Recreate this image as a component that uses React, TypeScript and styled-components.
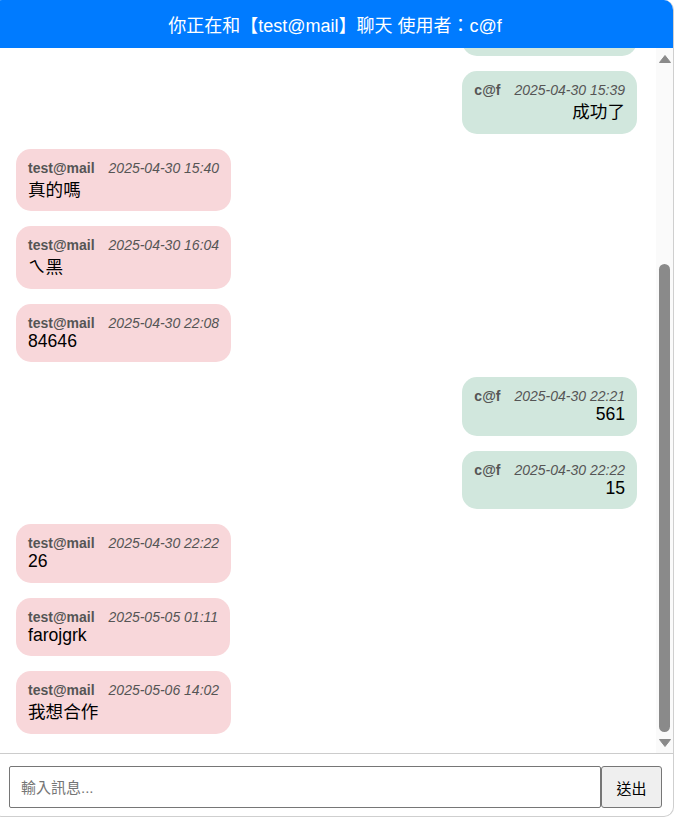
import React, { useLayoutEffect, useRef, useState } from "react";
import styled, { createGlobalStyle } from "styled-components";

const GlobalStyle = createGlobalStyle`
  html, body {
    margin: 0;
    padding: 0;
    background: #ffffff;
    overflow: hidden;
  }
  body {
    font-family: "Liberation Sans", Arial, "Noto Sans CJK TC", sans-serif;
  }
`;

const Container = styled.div`
  box-sizing: border-box;
  width: 682px;
  height: 817px;
  margin-left: -8px;
  border: 1px solid #cfcfcf;
  border-top: none;
  border-radius: 10px;
  overflow: hidden;
  display: flex;
  flex-direction: column;
  background: #fff;
`;

const Header = styled.div`
  flex: none;
  height: 48px;
  box-sizing: border-box;
  padding: 11px 0 11px 4px;
  background: #007bff;
  color: #fff;
  text-align: center;
  font-size: 18px;
  font-family: "Liberation Sans", Arial, "Noto Sans CJK TC", sans-serif;
`;

const Body = styled.div`
  flex: 1;
  min-height: 0;
  display: flex;
`;

const Messages = styled.div`
  flex: 1;
  min-width: 0;
  overflow-y: scroll;
  display: flex;
  flex-direction: column;
  gap: 15px;
  padding: 10px 19px 19px 23px;
  box-sizing: border-box;
  scrollbar-width: none;
  &::-webkit-scrollbar {
    display: none;
  }
`;

const ScrollTrack = styled.div`
  flex: none;
  width: 17px;
  background: #fafafa;
  display: flex;
  flex-direction: column;
  align-items: center;
`;

const ArrowButton = styled.div`
  flex: none;
  height: 21px;
  width: 17px;
  display: flex;
  align-items: center;
  justify-content: center;
`;

const ThumbArea = styled.div`
  flex: 1;
  width: 100%;
  position: relative;
`;

const Thumb = styled.div`
  position: absolute;
  left: 3px;
  width: 11px;
  border-radius: 6px;
  background: #8a8a8a;
`;

const Row = styled.div<{ $mine: boolean }>`
  display: flex;
  justify-content: ${(p) => (p.$mine ? "flex-end" : "flex-start")};
  flex: none;
`;

const Bubble = styled.div<{ $mine: boolean }>`
  background: ${(p) => (p.$mine ? "#d1e7dd" : "#f8d7da")};
  border-radius: 15px;
  padding: 11px 12px 10.5px;
  text-align: ${(p) => (p.$mine ? "right" : "left")};
  max-width: 70%;
`;

const Meta = styled.div`
  font-size: 14px;
  color: #555;
  white-space: nowrap;
`;

const Name = styled.span`
  font-weight: bold;
  margin-right: 14px;
`;

const Time = styled.span`
  font-style: italic;
`;

const Text = styled.div`
  font-size: 17.6px;
  color: #000;
`;

const InputBar = styled.div`
  flex: none;
  display: flex;
  border-top: 1px solid #cccccc;
  padding: 12px 11px 8px 16px;
`;

const Input = styled.input`
  flex: 1;
  min-width: 0;
  height: 42px;
  box-sizing: border-box;
  border: 1px solid #767676;
  border-radius: 2px;
  padding: 0 11px;
  font-size: 15px;
  font-family: "Liberation Sans", Arial, "Noto Sans CJK TC", sans-serif;
  outline: none;
  &::placeholder {
    color: #757575;
  }
`;

const SendButton = styled.button`
  flex: none;
  width: 61px;
  height: 42px;
  box-sizing: border-box;
  background: #efefef;
  border: 1px solid #767676;
  border-radius: 3px;
  font-size: 15px;
  color: #000;
  font-family: "Liberation Sans", Arial, "Noto Sans CJK TC", sans-serif;
  padding: 0;
`;

type Msg = { from: string; time: string; text: string };

const ME = "c@f";

const messages: Msg[] = [
  { from: "test@mail", time: "2025-04-30 15:30", text: "你好" },
  { from: "c@f", time: "2025-04-30 15:32", text: "哈囉" },
  { from: "test@mail", time: "2025-04-30 15:35", text: "測試" },
  { from: "c@f", time: "2025-04-30 15:38", text: "test" },
  { from: "c@f", time: "2025-04-30 15:39", text: "成功了" },
  { from: "test@mail", time: "2025-04-30 15:40", text: "真的嗎" },
  { from: "test@mail", time: "2025-04-30 16:04", text: "ㄟ黑" },
  { from: "test@mail", time: "2025-04-30 22:08", text: "84646" },
  { from: "c@f", time: "2025-04-30 22:21", text: "561" },
  { from: "c@f", time: "2025-04-30 22:22", text: "15" },
  { from: "test@mail", time: "2025-04-30 22:22", text: "26" },
  { from: "test@mail", time: "2025-05-05 01:11", text: "farojgrk" },
  { from: "test@mail", time: "2025-05-06 14:02", text: "我想合作" },
];

function Arrow({ up }: { up: boolean }) {
  return (
    <svg width="12" height="8" viewBox="0 0 12 8">
      <polygon
        points={up ? "6,0.5 11.5,7.5 0.5,7.5" : "0.5,0.5 11.5,0.5 6,7.5"}
        fill="#8a8a8a"
        strokeLinejoin="round"
        stroke="#8a8a8a"
        strokeWidth="1"
      />
    </svg>
  );
}

export default function App() {
  const listRef = useRef<HTMLDivElement>(null);
  const areaRef = useRef<HTMLDivElement>(null);
  const [thumb, setThumb] = useState({ top: 0, height: 0 });

  const update = () => {
    const el = listRef.current;
    const area = areaRef.current;
    if (!el || !area) return;
    const h = area.clientHeight;
    const ratio = el.clientHeight / el.scrollHeight;
    setThumb({
      top: (el.scrollTop / el.scrollHeight) * h,
      height: Math.max(20, ratio * h),
    });
  };

  useLayoutEffect(() => {
    const el = listRef.current;
    if (el) el.scrollTop = el.scrollHeight;
    update();
  }, []);

  return (
    <>
      <GlobalStyle />
      <Container>
        <Header>你正在和【test@mail】聊天 使用者：c@f</Header>
        <Body>
          <Messages ref={listRef} onScroll={update}>
            {messages.map((m, i) => {
              const mine = m.from === ME;
              return (
                <Row key={i} $mine={mine}>
                  <Bubble $mine={mine}>
                    <Meta>
                      <Name>{m.from}</Name>
                      <Time>{m.time}</Time>
                    </Meta>
                    <Text>{m.text}</Text>
                  </Bubble>
                </Row>
              );
            })}
          </Messages>
          <ScrollTrack>
            <ArrowButton>
              <Arrow up />
            </ArrowButton>
            <ThumbArea ref={areaRef}>
              <Thumb style={{ top: thumb.top, height: thumb.height }} />
            </ThumbArea>
            <ArrowButton>
              <Arrow up={false} />
            </ArrowButton>
          </ScrollTrack>
        </Body>
        <InputBar>
          <Input placeholder="輸入訊息..." />
          <SendButton>送出</SendButton>
        </InputBar>
      </Container>
    </>
  );
}
